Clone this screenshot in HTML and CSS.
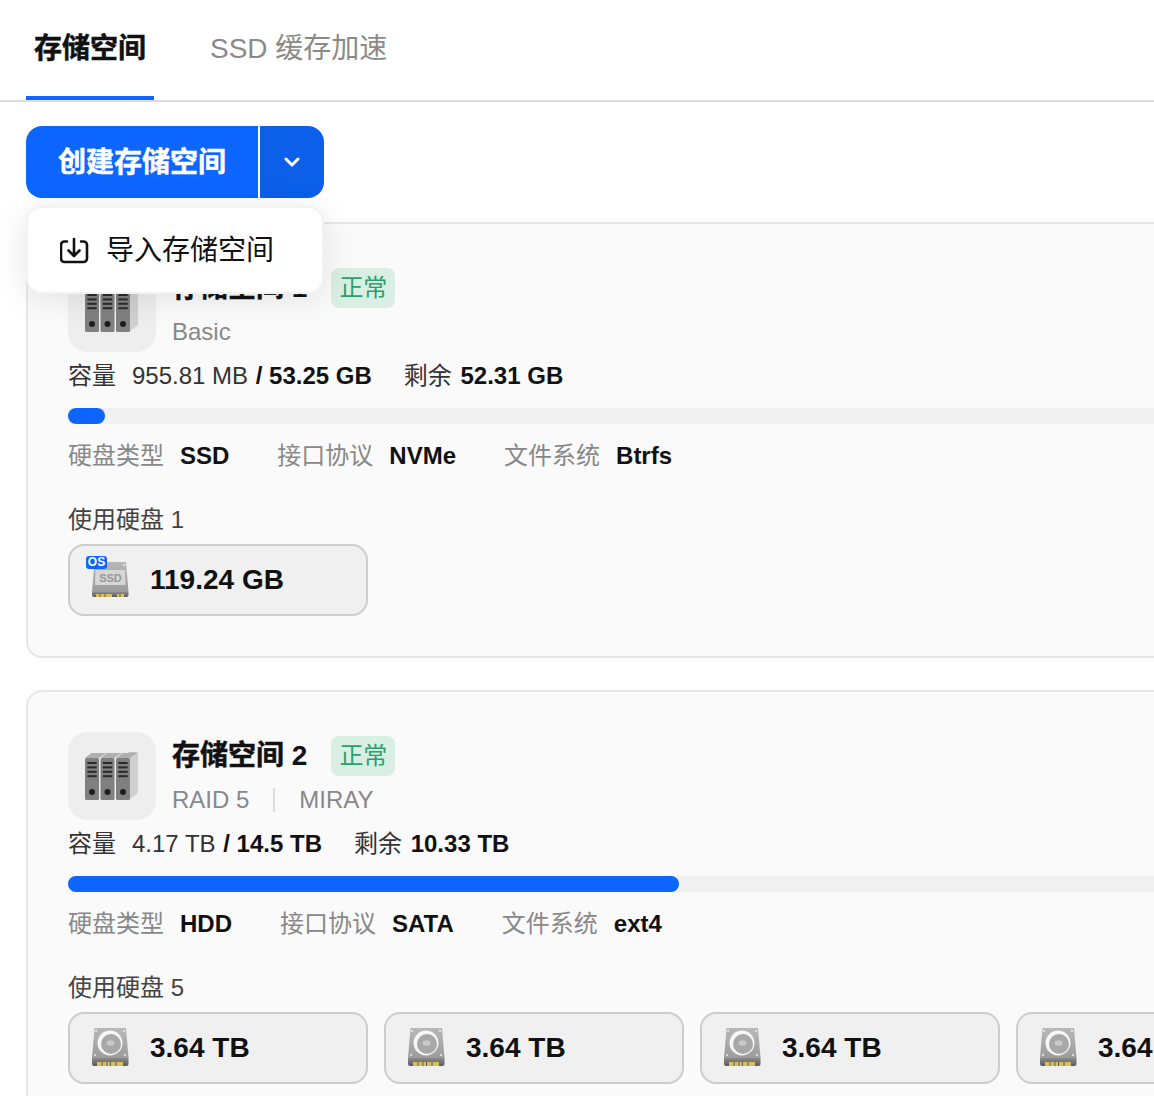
FILE: index.html
```html
<!DOCTYPE html>
<html lang="zh-CN">
<head>
<meta charset="utf-8">
<title>存储空间</title>
<link rel="stylesheet" href="styles.css">
</head>
<body>
<svg class="defs" width="0" height="0" aria-hidden="true">
  <defs>
    <linearGradient id="gs" x1="0" y1="0" x2="0" y2="1"><stop offset="0" stop-color="#b8b8b8"/><stop offset="1" stop-color="#9c9c9c"/></linearGradient>
    <linearGradient id="gb" x1="0" y1="0" x2="0" y2="1"><stop offset="0" stop-color="#8c8c8c"/><stop offset="1" stop-color="#5a5a5a"/></linearGradient>
    <g id="book">
      <path d="M0 7 L6.500 2 H21 L14 7Z" fill="#b0b0b0"/>
      <rect x="0" y="7" width="14" height="42" rx="1.500" fill="#808080"/>
      <rect x="2.300" y="11" width="9.400" height="2" fill="#2a2a2a"/>
      <rect x="2.300" y="15.400" width="9.400" height="2" fill="#2a2a2a"/>
      <rect x="2.300" y="19.800" width="9.400" height="2" fill="#2a2a2a"/>
      <rect x="2.300" y="24.200" width="9.400" height="2" fill="#2a2a2a"/>
      <circle cx="7" cy="41" r="3" fill="#1e1e1e"/>
    </g>
    <g id="stack">
      <path d="M45 7 L53 1 V42 L45 48Z" fill="#d0d0d0"/>
      <path d="M37 7 L44 1 H53 L45 7Z" fill="#c0c0c0"/>
      <use href="#book" x="0"/>
      <use href="#book" x="15.500"/>
      <use href="#book" x="31"/>
    </g>
    <g id="hdd">
      <path d="M3.500 0 H35 L37.500 30 H1Z" fill="url(#gs)"/>
      <path d="M1 30 H37.500 V36 Q37.500 38 35.500 38 H3 Q1 38 1 36Z" fill="url(#gb)"/>
      <circle cx="19" cy="15" r="12.500" fill="#f6f6f6"/>
      <circle cx="20" cy="16" r="10" fill="#a8a8a8"/>
      <ellipse cx="19.500" cy="15" rx="4" ry="2.800" fill="#c9c9c9"/>
      <circle cx="5" cy="3" r="1" fill="#eee"/><circle cx="33" cy="3" r="1" fill="#eee"/>
      <circle cx="4" cy="27" r="1" fill="#eee"/><circle cx="34" cy="27" r="1" fill="#eee"/>
      <path d="M6 34 H32 V38 H6Z" fill="#d6c05a"/>
      <path d="M11 34 V38 M16 34 V38 M19.500 34 V38 M25 34 V38" stroke="#5a5a5a" stroke-width="1"/>
    </g>
    <g id="ssd">
      <path d="M3.500 2 H35 L37.500 32 H1Z" fill="url(#gs)"/>
      <path d="M1 32 H37.500 V35 Q37.500 37 35.500 37 H3 Q1 37 1 35Z" fill="url(#gb)"/>
      <path d="M4.500 10 H34 L34.500 25 H4Z" fill="#d6d6d6"/>
      <path d="M5 34 H21 V37 H5Z M26 34 H33 V37 H26Z" fill="#d6c05a"/>
      <path d="M9 34 V37 M14 34 V37 M29 34 V37" stroke="#5a5a5a" stroke-width="1"/>
      <circle cx="33" cy="5" r="1" fill="#eee"/>
    </g>
  </defs>
</svg>
<main class="page">
  <nav class="tabs">
    <a class="tab tab-active">存储空间</a>
    <a class="tab">SSD 缓存加速</a>
  </nav>
  <section class="toolbar">
    <div class="split">
      <button class="split-main">创建存储空间</button>
      <button class="split-arrow" aria-label="更多">
        <svg width="16" height="10" viewBox="0 0 16 10"><path d="M2 2 L8 8 L14 2" fill="none" stroke="#fff" stroke-width="3" stroke-linecap="round" stroke-linejoin="round"/></svg>
      </button>
    </div>
    <div class="menu">
      <svg width="30" height="28" viewBox="1 0 30 28"><path d="M8 5.500 H5.500 A3.500 3.500 0 0 0 2 9 V22.500 A3.500 3.500 0 0 0 5.500 26 H24.500 A3.500 3.500 0 0 0 28 22.500 V9 A3.500 3.500 0 0 0 24.500 5.500 H22" fill="none" stroke="#111" stroke-width="2.600" stroke-linecap="round"/><path d="M15 3 V20 M9.500 14.500 L15 20 L20.500 14.500" fill="none" stroke="#111" stroke-width="2.600" stroke-linecap="round" stroke-linejoin="round"/></svg>
      <span class="menu-text">导入存储空间</span>
    </div>
  </section>
  <section class="pools">
    <article class="pool">
      <header class="pool-head">
        <div class="pool-icon"><svg width="56" height="50" viewBox="0 0 56 50"><use href="#stack"/></svg></div>
        <div class="pool-info">
          <div class="pool-title"><h2><span class="heavy">存储空间</span> 1</h2><span class="status">正常</span></div>
          <div class="pool-sub"><span>Basic</span></div>
        </div>
      </header>
      <p class="capacity"><span class="cap-label">容量</span><span>955.81 MB <b>/ 53.25 GB</b></span><span class="cap-free">剩余 <b>52.31 GB</b></span></p>
      <div class="bar"><div class="bar-fill" style="width:37px"></div></div>
      <dl class="specs">
        <div><dt>硬盘类型</dt><dd>SSD</dd></div>
        <div><dt>接口协议</dt><dd>NVMe</dd></div>
        <div><dt>文件系统</dt><dd>Btrfs</dd></div>
      </dl>
      <p class="disks-label">使用硬盘 1</p>
      <div class="disks">
        <div class="disk">
          <span class="disk-icon"><svg width="38" height="38" viewBox="0 0 38 38"><use href="#ssd"/><text x="19.500" y="21.500" class="ssd-text">SSD</text></svg><span class="os">OS</span></span>
          <b>119.24 GB</b>
        </div>
      </div>
    </article>
    <article class="pool">
      <header class="pool-head">
        <div class="pool-icon"><svg width="56" height="50" viewBox="0 0 56 50"><use href="#stack"/></svg></div>
        <div class="pool-info">
          <div class="pool-title"><h2><span class="heavy">存储空间</span> 2</h2><span class="status">正常</span></div>
          <div class="pool-sub"><span>RAID 5</span><i class="sep"></i><span>MIRAY</span></div>
        </div>
      </header>
      <p class="capacity"><span class="cap-label">容量</span><span>4.17 TB <b>/ 14.5 TB</b></span><span class="cap-free">剩余 <b>10.33 TB</b></span></p>
      <div class="bar"><div class="bar-fill" style="width:611px"></div></div>
      <dl class="specs">
        <div><dt>硬盘类型</dt><dd>HDD</dd></div>
        <div><dt>接口协议</dt><dd>SATA</dd></div>
        <div><dt>文件系统</dt><dd>ext4</dd></div>
      </dl>
      <p class="disks-label">使用硬盘 5</p>
      <div class="disks">
        <div class="disk"><span class="disk-icon"><svg width="38" height="38" viewBox="0 0 38 38"><use href="#hdd"/></svg></span><b>3.64 TB</b></div>
        <div class="disk"><span class="disk-icon"><svg width="38" height="38" viewBox="0 0 38 38"><use href="#hdd"/></svg></span><b>3.64 TB</b></div>
        <div class="disk"><span class="disk-icon"><svg width="38" height="38" viewBox="0 0 38 38"><use href="#hdd"/></svg></span><b>3.64 TB</b></div>
        <div class="disk"><span class="disk-icon"><svg width="38" height="38" viewBox="0 0 38 38"><use href="#hdd"/></svg></span><b>3.64 TB</b></div>
      </div>
    </article>
  </section>
</main>
</body>
</html>
```
FILE: styles.css
```css
* { box-sizing: border-box; }
html, body { margin: 0; padding: 0; height: 1096px; overflow: hidden; background: #fff; }
body { font-family: "Liberation Sans", "Noto Sans CJK SC", sans-serif; color: #000; }
.defs { position: absolute; }
.page { width: 1154px; }
.tabs { display: flex; gap: 40px; height: 102px; padding-left: 26px; border-bottom: 2px solid #dcdcdc; }
.tab { height: 100px; padding: 0 8px; font-size: 28px; line-height: 97px; color: #8a8a8a; }
.tab + .tab { margin-left: 8px; }
.tab-active { color: #111; font-weight: 700; border-bottom: 4px solid #0c66ff; -webkit-text-stroke: .5px #111; }
.toolbar { position: relative; padding: 24px 0 24px 26px; }
.split { display: flex; width: 298px; height: 72px; border-radius: 16px; overflow: hidden; }
.split button { border: 0; padding: 0; color: #fff; font: inherit; }
.split .split-main { width: 232px; padding-bottom: 4px; background: #0c66ff; font-size: 28px; font-weight: 700; -webkit-text-stroke: .5px #fff; }
.split .split-arrow { width: 64px; margin-left: 2px; background: #0b5fe8; display: flex; align-items: center; justify-content: center; }
.menu { position: absolute; z-index: 2; left: 26px; top: 104px; width: 298px; height: 88px; display: flex; align-items: center; gap: 16px; padding-left: 32px; background: #fff; border: 2px solid #f2f2f2; border-radius: 16px; box-shadow: 0 4px 32px rgba(0,0,0,.1); font-size: 28px; color: #111; }
.menu-text { padding-bottom: 4px; }
.pools { display: flex; flex-direction: column; gap: 32px; padding-left: 26px; }
.pool { width: 1400px; padding: 40px; background: #fafafa; border: 2px solid #e6e6e6; border-radius: 16px; }
.pool-head { display: flex; gap: 16px; height: 88px; }
.pool-icon { width: 88px; height: 88px; border-radius: 20px; background: #eee; display: flex; align-items: center; justify-content: center; padding-left: 2px; }
.pool-info { display: flex; flex-direction: column; }
.pool-title { display: flex; align-items: center; gap: 24px; height: 48px; }
.pool-title h2 { margin: 0; font-size: 28px; line-height: 44px; font-weight: 700; color: #111; }
.heavy { -webkit-text-stroke: .5px #111; }
.status { width: 64px; height: 40px; border-radius: 8px; background: #d9efe4; color: #2e9e6a; font-size: 24px; text-align: center; line-height: 40px; }
.pool-sub { display: flex; align-items: center; font-size: 24px; color: #888; height: 40px; }
.sep { width: 2px; height: 24px; margin: 0 24px; background: #ddd; }
.capacity { display: flex; align-items: baseline; margin: 4px 0 0; height: 40px; font-size: 24px; line-height: 40px; color: #333; }
.capacity b { margin-left: 1px; color: #111; }
.capacity .cap-free b { margin-left: 2px; }
.cap-label { width: 64px; }
.cap-free { margin-left: 32px; }
.bar { height: 16px; margin-top: 12px; border-radius: 8px; background: #f0f0f0; }
.bar-fill { height: 16px; border-radius: 8px; background: #0c66ff; }
.specs { display: flex; gap: 48px; margin: 12px 0 0; height: 40px; font-size: 24px; line-height: 40px; }
.specs div { display: flex; gap: 16px; }
.specs dt { color: #888; }
.specs dd { margin: 0; font-weight: 700; color: #111; }
.disks-label { margin: 24px 0 0; height: 40px; line-height: 40px; font-size: 24px; color: #444; }
.disks { display: flex; gap: 16px; margin-top: 4px; }
.disk { flex: none; display: flex; align-items: center; gap: 21px; width: 300px; height: 72px; padding-left: 21px; background: #f0f0f0; border: 2px solid #ccc; border-radius: 16px; font-size: 28px; color: #111; overflow: hidden; }
.disk-icon { position: relative; display: flex; width: 38px; height: 38px; margin-bottom: 2px; }
.ssd-text { font: 700 11px "Liberation Sans", sans-serif; fill: #969696; text-anchor: middle; }
.os { position: absolute; left: -5px; top: -4px; width: 21px; height: 13px; border-radius: 3px; background: #0c66ff; color: #fff; font-size: 12px; font-weight: 700; line-height: 13px; text-align: center; }
```
